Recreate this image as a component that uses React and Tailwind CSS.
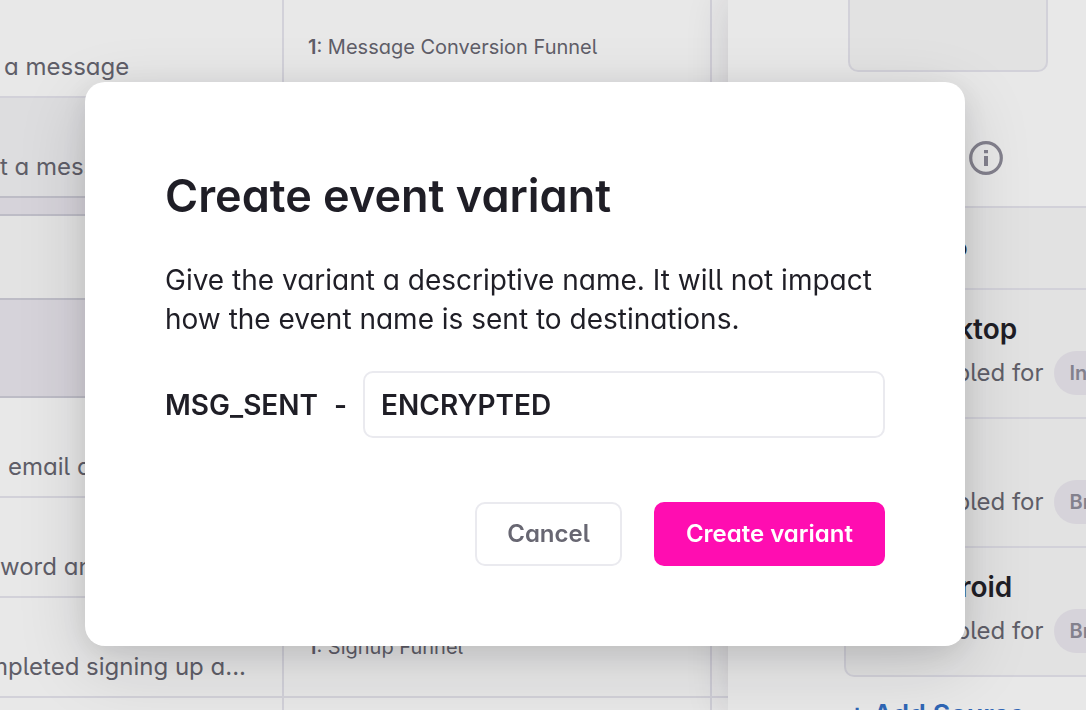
const rows = [
  { text: 'a message', funnel: 'Message Conversion Funnel', pad: 'pl-1' },
  { text: 't a message', tone: 'bg-[#dddddf]', line: 'border-b-[#bdbcc6]' },
];

const moreRows = [
  { text: 'email and', pad: 'pl-2' },
  { text: 'word and' },
  { text: 'mpleted signing up a...', funnel: 'Signup Funnel', pad: 'justify-end pr-9' },
];

const sources = [
  { name: 'Desktop', tag: 'Intercom' },
  { name: 'iOS', tag: 'Braze' },
  { name: 'Android', tag: 'Braze' },
];

function EventRow({ text, funnel, tone = '', pad = '', line = 'border-b-[#d2d1d9]' }) {
  return (
    <tr className={`h-[100px] ${tone}`}>
      <td className={`border-r-2 border-b-2 border-r-[#d2d1d9] p-0 pb-[13px] align-bottom ${line}`}>
        <div className={`flex overflow-hidden whitespace-nowrap text-2xl text-[#5f5e68] ${pad}`}>{text}</div>
      </td>
      <td className={`border-r-2 border-b-2 border-r-[#d2d1d9] py-0 pl-6 text-xl text-[#5f5e68] ${line}`}>
        {funnel && (
          <>
            <span className="font-semibold">1</span>: {funnel}
          </>
        )}
      </td>
      <td className={`border-b-2 ${line}`} />
    </tr>
  );
}

function BandRow({ className }) {
  return (
    <tr className={className}>
      <td colSpan={3} className="border-b-2 border-[#bdbcc6] p-0" />
    </tr>
  );
}

function EventTable() {
  return (
    <table className="-mt-0.5 w-full table-fixed border-separate border-spacing-0">
      <colgroup>
        <col className="w-[284px]" />
        <col />
        <col className="w-4" />
      </colgroup>
      <tbody>
        {rows.map((row) => (
          <EventRow key={row.text} {...row} />
        ))}
        <BandRow className="h-[18px] bg-[#d6d3da]" />
        <BandRow className="h-[84px] bg-[#e3e3e3]" />
        <BandRow className="h-[98px] bg-[#d6d3da]" />
        {moreRows.map((row) => (
          <EventRow key={row.text} {...row} />
        ))}
        <EventRow text="" />
      </tbody>
    </table>
  );
}

function InfoIcon() {
  return (
    <svg viewBox="0 0 34 34" className="size-[34px]" fill="none" aria-hidden="true">
      <circle cx="17" cy="17" r="15.3" stroke="#83818d" strokeWidth="3.2" />
      <path d="M15 9h4v3.2h-4zM15 15h4v10h-4z" fill="#83818d" />
    </svg>
  );
}

function SourcePanel() {
  return (
    <aside className="relative w-[358px] shrink-0 overflow-hidden bg-[#e8e8e8] shadow-[0_0_40px_rgba(30,25,50,0.16)]">
      <div className="ml-[120px] h-[72px] w-[200px] rounded-b-[10px] border-2 border-t-0 border-[#d2d1d9] bg-[#e2e2e2]" />
      <div className="mt-[69px] flex pl-[241px]">
        <InfoIcon />
      </div>
      <div className="-mr-8 ml-[116px] mt-[31px] rounded-[10px] border-2 border-[#d2d1d9] bg-[#e2e2e2] text-[#1f1e26]">
        <h2 className="flex h-20 items-center pl-[18px] text-2xl font-semibold">Web app</h2>
        {sources.map((source) => (
          <div key={source.name} className="flex h-[129px] flex-col justify-end border-t-2 border-[#d2d1d9] pb-[22px] pl-[59px]">
            <h3 className="text-[28px] leading-[44px] font-semibold">{source.name}</h3>
            <div className="flex items-center gap-2.5 whitespace-nowrap text-2xl text-[#5f5e68]">
              Disabled for
              <span className="flex h-11 items-center rounded-full bg-[#d6d3da] px-4 text-xl font-semibold text-[#83818d]">
                {source.tag}
              </span>
            </div>
          </div>
        ))}
      </div>
      <button
        type="button"
        className="mt-5 ml-[120px] whitespace-nowrap text-[27px] leading-9 font-semibold text-[#2f66b5]"
      >
        + Add Source
      </button>
    </aside>
  );
}

function CreateVariantModal() {
  return (
    <div className="fixed inset-0 pt-[82px] pr-[121px] pl-[85px]">
      <form
        role="dialog"
        aria-labelledby="modal-title"
        className="w-full rounded-[20px] bg-white p-20 text-[#1f1e26] shadow-[0_20px_70px_rgba(20,20,30,0.14),0_6px_30px_rgba(20,20,30,0.1)]"
      >
        <h1 id="modal-title" className="text-[45px] leading-[68px] font-semibold">
          Create event variant
        </h1>
        <p className="mt-[31px] text-[28px] leading-[39px]">
          Give the variant a descriptive name. It will not impact how the event name is sent to destinations.
        </p>
        <div className="mt-8 flex items-center gap-4 text-[28px] font-semibold">
          <label htmlFor="variant-name">MSG_SENT</label>
          <span>-</span>
          <input
            id="variant-name"
            type="text"
            defaultValue="ENCRYPTED"
            className="h-[67px] min-w-0 flex-1 rounded-[10px] border-2 border-[#eaeaef] px-4 outline-none"
          />
        </div>
        <div className="mt-16 flex justify-end gap-8 text-2xl font-semibold">
          <button type="button" className="h-16 rounded-[10px] border-2 border-[#eaeaef] px-[30px] text-[#686772]">
            Cancel
          </button>
          <button type="button" className="h-16 rounded-[10px] bg-[#ff0db1] px-8 text-white">
            Create variant
          </button>
        </div>
      </form>
    </div>
  );
}

export default function App() {
  return (
    <div className="flex h-screen overflow-hidden bg-[#e8e8e8] font-['Inter',sans-serif] [font-feature-settings:'cv11','cv05']">
      <main className="min-w-0 flex-1">
        <EventTable />
      </main>
      <SourcePanel />
      <CreateVariantModal />
    </div>
  );
}
